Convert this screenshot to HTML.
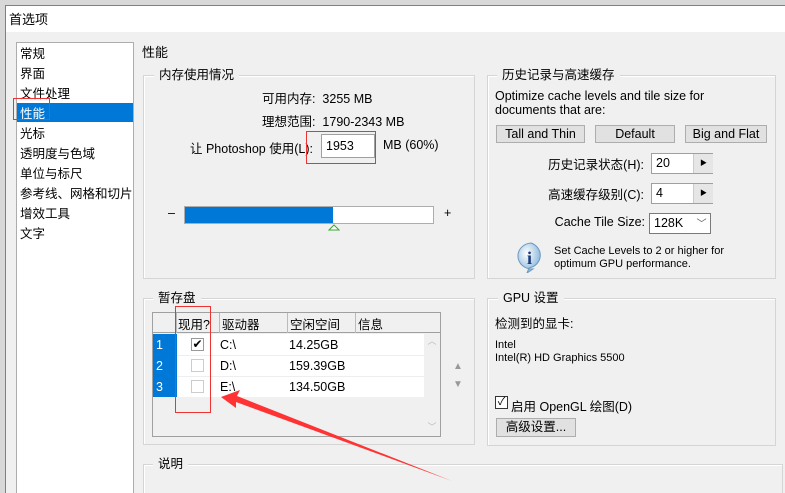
<!DOCTYPE html>
<html><head><meta charset="utf-8"><style>
*{margin:0;padding:0;box-sizing:border-box}
html,body{width:785px;height:493px;overflow:hidden}
body{background:#d8d8d8;font-family:"Liberation Sans","Noto Sans CJK SC",sans-serif;font-size:12.5px;color:#000;position:relative}
.a{position:absolute;white-space:nowrap}
.win{position:absolute;left:5px;top:5px;width:780px;height:488px;border-left:1px solid #2a9fc4;border-top:1px solid #2a9fc4;background:#f0f0f0}
.title{position:absolute;left:6px;top:6px;width:779px;height:26px;background:#fff}
.grp{position:absolute;border:1px solid #d5d5d5;box-shadow:inset 1px 1px 0 #fff}
.leg{position:absolute;background:#f0f0f0;padding:0 5px;line-height:14px}
.btn{position:absolute;background:#e1e1e1;border:1px solid #adadad;text-align:center;line-height:16px}
.inp{position:absolute;background:#fff;border:1px solid #a0a0a0;padding-left:4px}
</style></head><body>
<div class="win"></div>
<div class="title"></div>
<div class="a" style="left:9px;top:9px;font-size:13px">首选项</div>

<div class="a" style="left:16px;top:42px;width:118px;height:460px;background:#fff;border:1px solid #adadad"></div>
<div class="a" style="left:17px;top:103px;width:116px;height:19px;background:#0078d7"></div>
<div class="a" style="left:20px;top:44px;line-height:20px;font-size:12.5px">常规<br>界面<br>文件处理<br><span style="color:#fff">性能</span><br>光标<br>透明度与色域<br>单位与标尺<br>参考线、网格和切片<br>增效工具<br>文字</div>
<div class="a" style="left:13px;top:98px;width:37px;height:22px;border:1px solid #e33"></div>

<div class="a" style="left:142px;top:42px;font-size:13px">性能</div>

<!-- memory -->
<div class="grp" style="left:143px;top:75px;width:332px;height:204px"></div>
<div class="leg" style="left:154px;top:68px">内存使用情况</div>
<div class="a" style="left:262px;top:88px">可用内存:&nbsp; 3255 MB</div>
<div class="a" style="left:262px;top:111px">理想范围:&nbsp; 1790-2343 MB</div>
<div class="a" style="left:190px;top:138px">让 Photoshop 使用(L):</div>
<div class="inp" style="left:321px;top:134px;width:54px;height:24px;line-height:22px">1953</div>
<div class="a" style="left:306px;top:131px;width:70px;height:33px;border:1px solid #e33"></div>
<div class="a" style="left:383px;top:138px">MB (60%)</div>
<div class="a" style="left:168px;top:206px">–</div>
<div class="a" style="left:444px;top:206px">+</div>
<div class="a" style="left:184px;top:206px;width:250px;height:18px;background:#fff;border:1px solid #adadad"></div>
<div class="a" style="left:185px;top:207px;width:148px;height:16px;background:#0078d7"></div>
<svg class="a" style="left:328px;top:224px" width="12" height="8"><polygon points="6,1 11,6 1,6" fill="#fff" stroke="#3a3"/></svg>

<!-- history -->
<div class="grp" style="left:487px;top:75px;width:289px;height:204px"></div>
<div class="leg" style="left:497px;top:68px">历史记录与高速缓存</div>
<div class="a" style="left:495px;top:89px;line-height:14px;white-space:normal;width:270px">Optimize cache levels and tile size for documents that are:</div>
<div class="btn" style="left:496px;top:125px;width:89px;height:18px">Tall and Thin</div>
<div class="btn" style="left:595px;top:125px;width:80px;height:18px">Default</div>
<div class="btn" style="left:685px;top:125px;width:82px;height:18px">Big and Flat</div>
<div class="a" style="right:141px;top:154px">历史记录状态(H):</div>
<div class="inp" style="left:651px;top:153px;width:62px;height:21px;line-height:19px">20</div>
<div class="a" style="left:693px;top:154px;width:20px;height:19px;background:#e6e6e6;border-left:1px solid #ccc;font-size:7px;text-align:center;line-height:19px">▶</div>
<div class="a" style="right:141px;top:184px">高速缓存级别(C):</div>
<div class="inp" style="left:651px;top:183px;width:62px;height:21px;line-height:19px">4</div>
<div class="a" style="left:693px;top:184px;width:20px;height:19px;background:#e6e6e6;border-left:1px solid #ccc;font-size:7px;text-align:center;line-height:19px">▶</div>
<div class="a" style="right:140px;top:215px">Cache Tile Size:</div>
<div class="inp" style="left:649px;top:213px;width:62px;height:21px;line-height:19px;border-color:#7a7a7a">128K <span style="color:#555;margin-left:10px;font-size:10px">﹀</span></div>
<svg class="a" style="left:514px;top:241px" width="34" height="32"><defs><radialGradient id="g" cx=".4" cy=".35" r=".7"><stop offset="0" stop-color="#fff"/><stop offset="1" stop-color="#7fb0d8"/></radialGradient></defs><path d="M17 2a14 13 0 1 0 2 26l-6 4 2-5A14 13 0 0 0 17 2z" fill="url(#g)" stroke="#6a9ac0"/><text x="13" y="23" font-family="Liberation Serif" font-weight="bold" font-size="18" fill="#1a3a7a">i</text></svg>
<div class="a" style="left:554px;top:245px;font-size:11px;line-height:13px">Set Cache Levels to 2 or higher for<br>optimum GPU performance.</div>

<!-- gpu -->
<div class="grp" style="left:487px;top:298px;width:289px;height:148px"></div>
<div class="leg" style="left:498px;top:291px">GPU 设置</div>
<div class="a" style="left:495px;top:313px">检测到的显卡:</div>
<div class="a" style="left:495px;top:339px;font-size:11px;line-height:13px">Intel<br>Intel(R) HD Graphics 5500</div>
<div class="a" style="left:495px;top:396px;width:13px;height:13px;border:1px solid #333;background:#fff;font-size:11px;line-height:11px;text-align:center">✓</div>
<div class="a" style="left:511px;top:396px">启用 OpenGL 绘图(D)</div>
<div class="btn" style="left:496px;top:418px;width:80px;height:19px">高级设置...</div>

<!-- scratch -->
<div class="grp" style="left:143px;top:298px;width:332px;height:147px"></div>
<div class="leg" style="left:153px;top:291px">暂存盘</div>
<div class="a" style="left:152px;top:312px;width:289px;height:125px;border:1px solid #a0a0a0;background:#f0f0f0"></div>
<div class="a" style="left:153px;top:313px;width:287px;height:20px;background:#f0f0f0;border-bottom:1px solid #a0a0a0"></div>
<div class="a" style="left:176px;top:313px;height:20px;border-left:1px solid #bbb"></div>
<div class="a" style="left:219px;top:313px;height:20px;border-left:1px solid #bbb"></div>
<div class="a" style="left:287px;top:313px;height:20px;border-left:1px solid #bbb"></div>
<div class="a" style="left:355px;top:313px;height:20px;border-left:1px solid #bbb"></div>
<div class="a" style="left:178px;top:314px">现用?</div>
<div class="a" style="left:222px;top:314px">驱动器</div>
<div class="a" style="left:290px;top:314px">空闲空间</div>
<div class="a" style="left:358px;top:314px">信息</div>
<div class="a" style="left:153px;top:334px;width:24px;height:63px;background:#0078d7"></div>
<div class="a" style="left:177px;top:334px;width:247px;height:63px;background:#fff"></div>
<div class="a" style="left:177px;top:355px;width:247px;border-top:1px solid #eee"></div>
<div class="a" style="left:177px;top:376px;width:247px;border-top:1px solid #eee"></div>
<div class="a" style="left:424px;top:334px;width:16px;height:102px;background:#f0f0f0;color:#bbb;font-size:9px;text-align:center">︿</div>
<div class="a" style="left:424px;top:420px;width:16px;color:#bbb;font-size:9px;text-align:center">﹀</div>
<div class="a" style="left:156px;top:335px;color:#fff;line-height:21px">1<br>2<br>3</div>
<div class="a" style="left:191px;top:338px;width:13px;height:13px;border:1px solid #999;font-size:12px;line-height:11px;text-align:center">✔</div>
<div class="a" style="left:191px;top:359px;width:13px;height:13px;border:1px solid #ccc"></div>
<div class="a" style="left:191px;top:380px;width:13px;height:13px;border:1px solid #ccc"></div>
<div class="a" style="left:220px;top:335px;line-height:21px">C:\<br>D:\<br>E:\</div>
<div class="a" style="left:289px;top:335px;line-height:21px">14.25GB<br>159.39GB<br>134.50GB</div>
<div class="a" style="left:453px;top:358px;color:#999;font-size:10px;line-height:18px">▲<br>▼</div>
<div class="a" style="left:175px;top:306px;width:36px;height:107px;border:1px solid #e33"></div>

<!-- description -->
<div class="grp" style="left:143px;top:464px;width:640px;height:40px"></div>
<div class="leg" style="left:153px;top:457px">说明</div>

<svg class="a" style="left:0;top:0" width="785" height="493"><polygon points="221,397 240,390 237,396 452,481 236,402 236,408" fill="#f33"/></svg>
</body></html>
